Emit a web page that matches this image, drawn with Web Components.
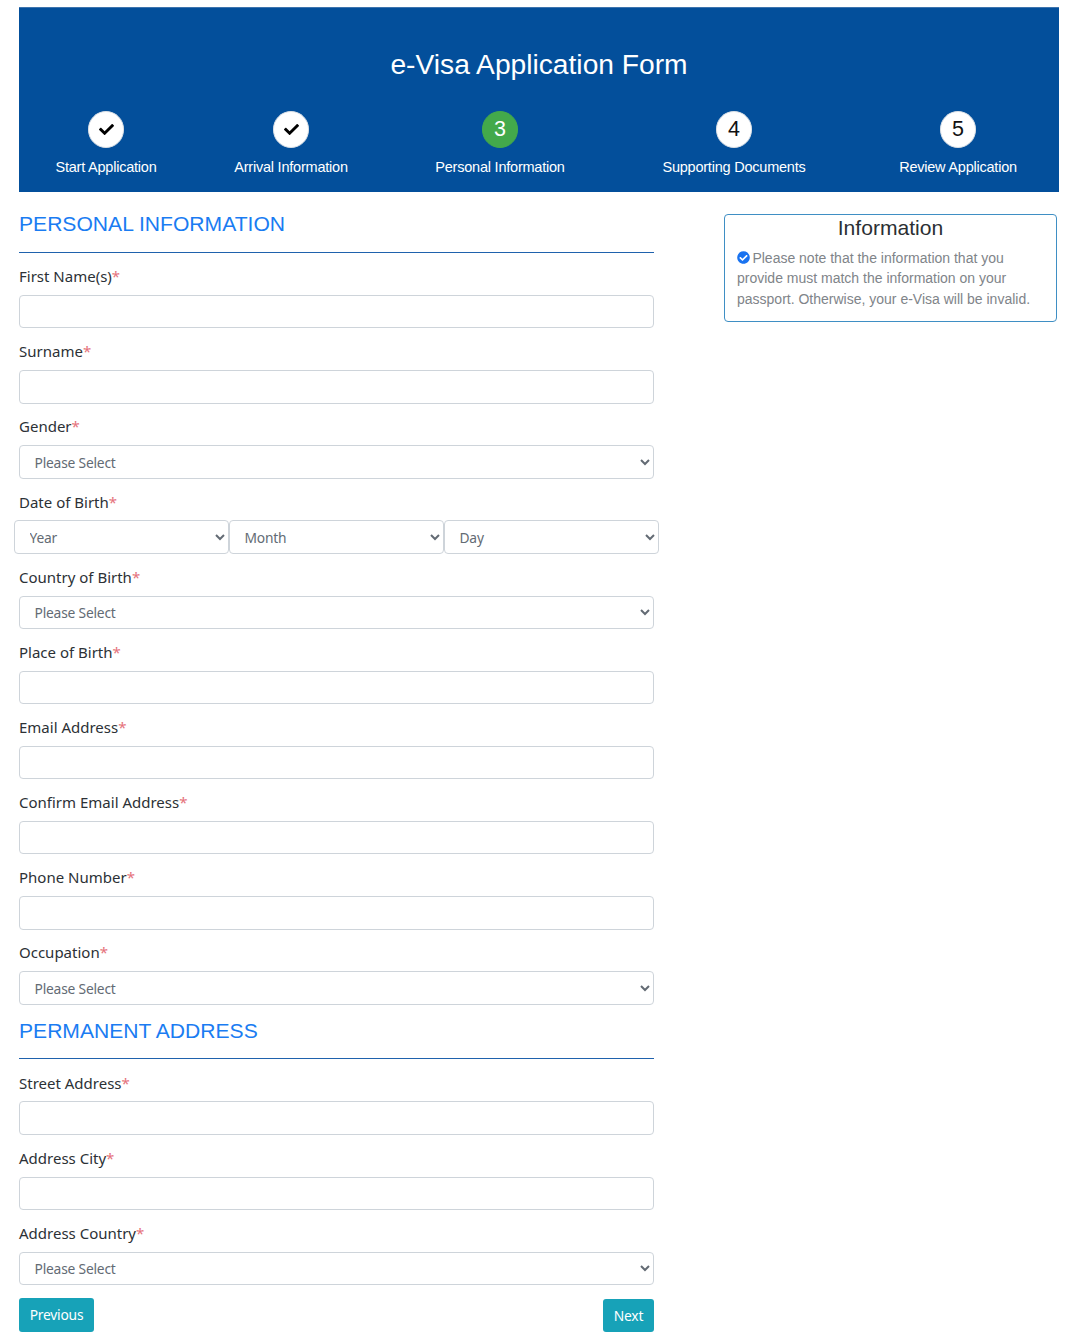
<!DOCTYPE html>
<html lang="en">
<head>
<meta charset="utf-8">
<title>e-Visa Application Form</title>
<style>
    html, body { margin: 0; padding: 0; background: #fff; }
    body { font-family: "Liberation Sans", Arial, sans-serif; }
</style>
</head>
<body>
<visa-page>
    <visa-header slot="header" heading="e-Visa Application Form">
        <visa-step state="done" label="Start Application"></visa-step>
        <visa-step state="done" label="Arrival Information"></visa-step>
        <visa-step state="active" num="3" label="Personal Information"></visa-step>
        <visa-step num="4" label="Supporting Documents"></visa-step>
        <visa-step num="5" label="Review Application"></visa-step>
    </visa-header>

    <form-heading>PERSONAL INFORMATION</form-heading>
    <form-field label="First Name(s)"></form-field>
    <form-field label="Surname"></form-field>
    <form-field label="Gender" type="select"></form-field>
    <form-field label="Date of Birth" type="date"></form-field>
    <form-field label="Country of Birth" type="select"></form-field>
    <form-field label="Place of Birth"></form-field>
    <form-field label="Email Address"></form-field>
    <form-field label="Confirm Email Address"></form-field>
    <form-field label="Phone Number"></form-field>
    <form-field label="Occupation" type="select"></form-field>

    <form-heading>PERMANENT ADDRESS</form-heading>
    <form-field label="Street Address"></form-field>
    <form-field label="Address City"></form-field>
    <form-field label="Address Country" type="select"></form-field>

    <form-actions></form-actions>

    <info-box slot="aside" heading="Information">Please note that the information that you provide must match the information on your passport. Otherwise, your e-Visa will be invalid.</info-box>
</visa-page>

<script>
const CHECK = 'M173.898 439.404l-166.4-166.4c-9.997-9.997-9.997-26.206 0-36.204l36.203-36.204c9.997-9.998 26.207-9.998 36.204 0L192 312.69 432.095 72.596c9.997-9.997 26.207-9.997 36.204 0l36.203 36.204c9.997 9.997 9.997 26.206 0 36.204l-294.4 294.401c-9.998 9.997-26.207 9.997-36.204-.001z';
const CHECK_CIRCLE = 'M504 256c0 136.967-111.033 248-248 248S8 392.967 8 256 119.033 8 256 8s248 111.033 248 248zM227.314 387.314l184-184c6.248-6.248 6.248-16.379 0-22.627l-22.627-22.627c-6.248-6.249-16.379-6.249-22.628 0L216 308.118l-70.059-70.059c-6.248-6.248-16.379-6.248-22.628 0l-22.627 22.627c-6.248 6.248-6.248 16.379 0 22.627l104 104c6.249 6.25 16.379 6.25 22.628.001z';
const UI_FONT = '"Noto Sans", "DejaVu Sans", sans-serif';

class VisaPage extends HTMLElement {
    constructor() {
        super();
        this.attachShadow({ mode: 'open' });
        this.shadowRoot.innerHTML = `
            <style>
                :host { display: block; padding: 6.5px 15px 0 19px; box-sizing: border-box; }
                .columns { display: flex; justify-content: space-between; }
                .main { width: 635px; padding-top: 21px; }
                .aside { width: 333px; padding-top: 22px; margin-right: 2px; }
            </style>
            <slot name="header"></slot>
            <div class="columns">
                <div class="main"><slot></slot></div>
                <div class="aside"><slot name="aside"></slot></div>
            </div>
        `;
    }
}

class VisaHeader extends HTMLElement {
    constructor() {
        super();
        this.attachShadow({ mode: 'open' });
        this.shadowRoot.innerHTML = `
            <style>
                :host { display: block; background: #034f9b; color: #fff; height: 185.5px; border-top: 1px solid #3d74ae; box-sizing: border-box; }
                h1 { margin: 0; padding-top: 37px; font: 400 28.2px/38px "Liberation Sans", Arial, sans-serif; text-align: center; }
                .steps { display: grid; grid-template-columns: 174fr 196fr 222fr 246fr 202fr; margin-top: 28.5px; }
            </style>
            <h1></h1>
            <div class="steps"><slot></slot></div>
        `;
        this.shadowRoot.querySelector('h1').textContent = this.getAttribute('heading');
    }
}

class VisaStep extends HTMLElement {
    constructor() {
        super();
        this.attachShadow({ mode: 'open' });
        const state = this.getAttribute('state');
        const badge = state === 'done'
            ? `<svg viewBox="0 0 512 512" width="15" height="15"><path fill="#000" d="${CHECK}"/></svg>`
            : `<span class="num">${this.getAttribute('num')}</span>`;
        this.shadowRoot.innerHTML = `
            <style>
                :host { display: flex; flex-direction: column; align-items: center; }
                .dot { width: 36.5px; height: 36.5px; border-radius: 50%; background: #fff; color: #111; display: flex; align-items: center; justify-content: center; font-size: 21.5px; box-sizing: border-box; border: 1px solid #d9dfe6; }
                .dot.active { background: #43a94b; color: #fff; border-color: #43a94b; }
                .num { position: relative; top: 0.5px; }
                .label { margin-top: 10px; font-size: 14.5px; line-height: 18px; letter-spacing: -0.22px; white-space: nowrap; }
            </style>
            <div class="dot ${state === 'active' ? 'active' : ''}">${badge}</div>
            <div class="label"></div>
        `;
        this.shadowRoot.querySelector('.label').textContent = this.getAttribute('label');
    }
}

class FormHeading extends HTMLElement {
    constructor() {
        super();
        this.attachShadow({ mode: 'open' });
        this.shadowRoot.innerHTML = `
            <style>
                :host { display: block; height: 39.5px; margin-bottom: 15.6px; border-bottom: 1px solid #1f62ad; box-sizing: border-box; color: #1a7cf2; font-size: 21.1px; line-height: 22.5px; }
            </style>
            <slot></slot>
        `;
    }
}

class FormField extends HTMLElement {
    constructor() {
        super();
        this.attachShadow({ mode: 'open' });
        const type = this.getAttribute('type') || 'text';
        let control = '<input type="text">';
        if (type === 'select') {
            control = '<select><option>Please Select</option></select>';
        } else if (type === 'date') {
            control = `<div class="date">
                <select><option>Year</option></select>
                <select><option>Month</option></select>
                <select><option>Day</option></select>
            </div>`;
        }
        this.shadowRoot.innerHTML = `
            <style>
                :host { display: block; height: 75.15px; font-family: ${UI_FONT}; }
                label { display: block; height: 26.9px; font-size: 15px; line-height: 17px; color: #2c3136; }
                label span { color: #e5727b; }
                input, select { display: block; width: 100%; height: 33.5px; margin: 0; box-sizing: border-box; background: #fff; border: 1px solid #ced4da; border-radius: 4px; font: 13.8px ${UI_FONT}; letter-spacing: -0.2px; color: #636b74; outline: none; }
                select { padding: 0 0 0 10.5px; }
                .date { display: grid; grid-template-columns: repeat(3, 1fr); margin: 0 -5px 0 -5px; }
            </style>
            <label></label>
            ${control}
        `;
        const label = this.shadowRoot.querySelector('label');
        label.textContent = this.getAttribute('label');
        const star = document.createElement('span');
        star.textContent = '*';
        label.appendChild(star);
    }
}

class FormActions extends HTMLElement {
    constructor() {
        super();
        this.attachShadow({ mode: 'open' });
        this.shadowRoot.innerHTML = `
            <style>
                :host { display: flex; justify-content: space-between; align-items: flex-start; margin-top: -1.9px; font-family: ${UI_FONT}; }
                button { height: 33.5px; border: none; border-radius: 3px; background: #17a2b8; color: #fff; font: 13.8px ${UI_FONT}; letter-spacing: -0.2px; padding: 0; }
                .next { margin-top: 0.5px; width: 51px; }
                .prev { width: 75px; }
            </style>
            <button class="prev">Previous</button>
            <button class="next">Next</button>
        `;
    }
}

class InfoBox extends HTMLElement {
    constructor() {
        super();
        this.attachShadow({ mode: 'open' });
        this.shadowRoot.innerHTML = `
            <style>
                :host { display: block; height: 108px; box-sizing: border-box; border: 1px solid #3f8fc4; border-radius: 4px; padding: 0 12px; }
                h2 { margin: 0; font: 400 21.1px/25px "Liberation Sans", Arial, sans-serif; color: #2b2f33; text-align: center; }
                p { margin: 7.5px 0 0; font-size: 14px; line-height: 20.7px; color: #808489; }
                svg { vertical-align: -1.5px; margin-right: -1.5px; }
            </style>
            <h2></h2>
            <p><svg viewBox="0 0 512 512" width="13" height="13"><path fill="#1a73f0" d="${CHECK_CIRCLE}"/></svg> <slot></slot></p>
        `;
        this.shadowRoot.querySelector('h2').textContent = this.getAttribute('heading');
    }
}

customElements.define('visa-page', VisaPage);
customElements.define('visa-header', VisaHeader);
customElements.define('visa-step', VisaStep);
customElements.define('form-heading', FormHeading);
customElements.define('form-field', FormField);
customElements.define('form-actions', FormActions);
customElements.define('info-box', InfoBox);
</script>
</body>
</html>
